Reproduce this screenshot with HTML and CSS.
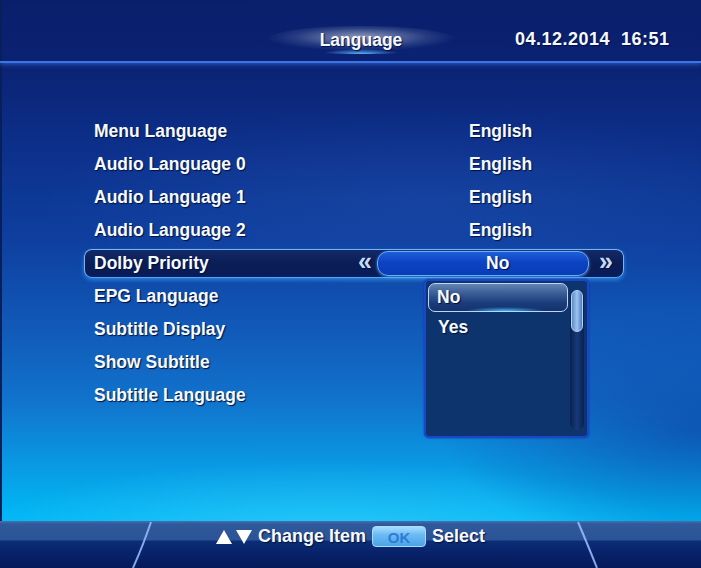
FILE: index.html
```html
<!DOCTYPE html>
<html>
<head>
<meta charset="utf-8">
<link rel="stylesheet" href="styles.css">
</head>
<body>
<div class="screen">
  <header class="header">
    <div class="title">Language</div>
    <div class="clock">04.12.2014&nbsp;&nbsp;16:51</div>
  </header>

  <main class="list">
    <div class="row"><span class="label">Menu Language</span><span class="value">English</span></div>
    <div class="row"><span class="label">Audio Language 0</span><span class="value">English</span></div>
    <div class="row"><span class="label">Audio Language 1</span><span class="value">English</span></div>
    <div class="row"><span class="label">Audio Language 2</span><span class="value">English</span></div>
    <div class="row active">
      <div class="bar">
        <span class="label">Dolby Priority</span>
        <span class="chev">«</span>
        <span class="pill">No</span>
        <span class="bar-end"><span class="chev">»</span></span>
      </div>
    </div>
    <div class="row"><span class="label">EPG Language</span></div>
    <div class="row"><span class="label">Subtitle Display</span></div>
    <div class="row"><span class="label">Show Subtitle</span></div>
    <div class="row"><span class="label">Subtitle Language</span></div>
  </main>

  <div class="dropdown">
    <div class="options">
      <div class="option selected">No</div>
      <div class="option">Yes</div>
    </div>
    <div class="scroll"><div class="thumb"></div></div>
  </div>

  <footer class="footer">
    <svg class="footer-lines" width="701" height="47" viewBox="0 0 701 47">
      <path d="M151 1 Q144 22 133 47" fill="none" stroke="#9cc0ff" stroke-width="2" stroke-opacity="0.85"/>
      <path d="M578 1 Q587 22 597 47" fill="none" stroke="#9cc0ff" stroke-width="2" stroke-opacity="0.85"/>
    </svg>
    <div class="hint">
      <svg class="tri" width="16" height="14" viewBox="0 0 16 14"><polygon points="8,0 16,14 0,14" fill="#ffffff"/></svg>
      <svg class="tri" width="16" height="14" viewBox="0 0 16 14"><polygon points="0,0 16,0 8,14" fill="#ffffff"/></svg>
      <span class="hint-text">Change Item</span>
      <span class="ok">OK</span>
      <span class="hint-text">Select</span>
    </div>
  </footer>
</div>
</body>
</html>
```
FILE: styles.css
```css
* { box-sizing: border-box; }
html, body { margin: 0; padding: 0; }
body {
  width: 701px;
  height: 568px;
  overflow: hidden;
  font-family: "Liberation Sans", Arial, sans-serif;
  font-weight: bold;
  color: #f6f9ff;
}
.screen {
  position: relative;
  width: 701px;
  height: 568px;
  display: flex;
  flex-direction: column;
  box-shadow: inset 2px 0 0 #08205a;
  background:
    radial-gradient(ellipse 260px 120px at 700px 430px, rgba(12, 50, 150, 0.55), rgba(12, 50, 150, 0) 100%),
    radial-gradient(ellipse 380px 90px at 420px 200px, rgba(60, 110, 210, 0.18), rgba(60, 110, 210, 0) 100%),
    radial-gradient(ellipse 360px 80px at 330px 540px, rgba(120, 230, 255, 0.35), rgba(120, 230, 255, 0) 100%),
    linear-gradient(180deg, #0a1f6c 0px, #0b2272 62px, #0c2d86 130px, #0e3f9f 240px, #115ab9 330px, #1173cc 400px, #0a96e2 460px, #03aeef 500px, #00b8f6 521px);
}
.header {
  height: 63px;
  flex: none;
  display: flex;
  align-items: center;
  padding-top: 18px;
  border-bottom: 2px solid #3c76e6;
  box-shadow: 0 1px 5px rgba(60, 120, 240, 0.7);
}
.title {
  margin-left: 266px;
  width: 190px;
  height: 28px;
  line-height: 28px;
  text-align: center;
  font-size: 17.5px;
  text-shadow: 1px 1px 1px #001040;
  border-radius: 50%;
  background:
    radial-gradient(ellipse 40px 5px at 50% 100%, rgba(90, 180, 255, 1), rgba(40, 120, 255, 0) 100%),
    radial-gradient(ellipse 95px 14px at 50% 40%, rgba(165, 175, 200, 0.85), rgba(70, 90, 150, 0.45) 70%, rgba(20, 40, 110, 0) 100%);
}
.clock {
  margin-left: 59px;
  font-size: 18px;
  letter-spacing: 0.5px;
  text-shadow: 1px 1px 1px #001040;
}
.list {
  flex: none;
  padding-top: 52px;
  display: flex;
  flex-direction: column;
}
.row {
  height: 33px;
  margin-left: 84px;
  width: 540px;
  display: flex;
  align-items: center;
  font-size: 17.5px;
  text-shadow: 1px 1px 1px #001238;
}
.row .label {
  width: 385px;
  padding-left: 10px;
}
.row.active .bar {
  width: 540px;
  height: 29px;
  display: flex;
  align-items: center;
  border-radius: 8px;
  border: 1.5px solid #78b4f4;
  border-bottom-color: #4aa6ff;
  box-shadow: 0 2px 4px rgba(60, 170, 255, 0.6);
  background: linear-gradient(180deg, #132a68 0%, #0b1d55 50%, #0a1c58 100%);
}
.row.active .label {
  flex: 1;
  width: auto;
  padding-left: 9px;
}
.chev {
  color: #c8daf2;
  font-size: 25px;
  width: 24px;
  text-align: center;
  line-height: 1;
  margin-top: -4px;
  text-shadow: 1px 1px 1px #001040;
}
.pill {
  width: 212px;
  height: 25px;
  line-height: 23px;
  padding-left: 108px;
  border-radius: 11px;
  border: 1.5px solid #6aaef8;
  background: linear-gradient(180deg, #1e5ed8 0%, #0c43c4 45%, #0a3cb8 100%);
  box-shadow: 0 1px 3px rgba(90, 190, 255, 0.7);
}
.bar-end {
  width: 34px;
  display: flex;
  justify-content: center;
}
.dropdown {
  position: absolute;
  left: 424px;
  top: 279px;
  width: 165px;
  height: 159px;
  border: 2px solid #1a46c8;
  border-radius: 5px;
  background: #0e346e;
  box-shadow: 0 0 2px #1030a0;
  display: flex;
  padding: 2px 3px 6px 2px;
  gap: 2px;
}
.options {
  flex: 1;
  display: flex;
  flex-direction: column;
}
.option {
  height: 30px;
  line-height: 30px;
  padding-left: 10px;
  font-size: 17.5px;
  text-shadow: 1px 1px 1px #001238;
}
.option.selected {
  height: 29px;
  line-height: 27px;
  border: 1.5px solid #bcd6f4;
  border-radius: 7px;
  background:
    radial-gradient(ellipse 40px 4px at 55% 100%, rgba(70, 190, 255, 0.95), rgba(70, 190, 255, 0) 100%),
    linear-gradient(180deg, #6484b4 0%, #3a5c96 35%, #1b3c7c 70%, #12336e 100%);
  padding-left: 8px;
}
.scroll {
  width: 14px;
  margin-top: 6px;
  border-radius: 7px;
  background: linear-gradient(90deg, #0a2150 0%, #163a7c 50%, #0a2150 100%);
  padding: 1px;
}
.thumb {
  height: 42px;
  border-radius: 6px;
  border: 1px solid #b5d2f2;
  background: linear-gradient(90deg, #5c8cc8 0%, #9cc4ee 50%, #4a7cc0 100%);
}
.footer {
  position: relative;
  margin-top: auto;
  height: 47px;
  flex: none;
  display: flex;
  align-items: flex-start;
  justify-content: center;
  padding-top: 4px;
  background: linear-gradient(180deg, #4670ad 0px, #30599c 3px, #2b5497 19px, #0c2d78 20px, #08226a 32px, #061a58 47px);
}
.footer-lines {
  position: absolute;
  left: 0;
  top: 0;
}
.hint {
  position: relative;
  display: flex;
  align-items: center;
  height: 23px;
  margin-left: 0;
  font-size: 18px;
  text-shadow: 1px 1px 1px #001238;
}
.tri { margin-right: 4px; }
.tri + .tri { margin-right: 6px; }
.ok {
  margin: 0 6px 0 6px;
  width: 54px;
  height: 21px;
  line-height: 21px;
  text-align: center;
  font-size: 15px;
  color: #2f7ad4;
  text-shadow: none;
  border-radius: 4px;
  border: 1px solid #a8dcff;
  background: linear-gradient(180deg, #a8dcff 0%, #6cbcf4 40%, #4aa2e8 100%);
}
```
